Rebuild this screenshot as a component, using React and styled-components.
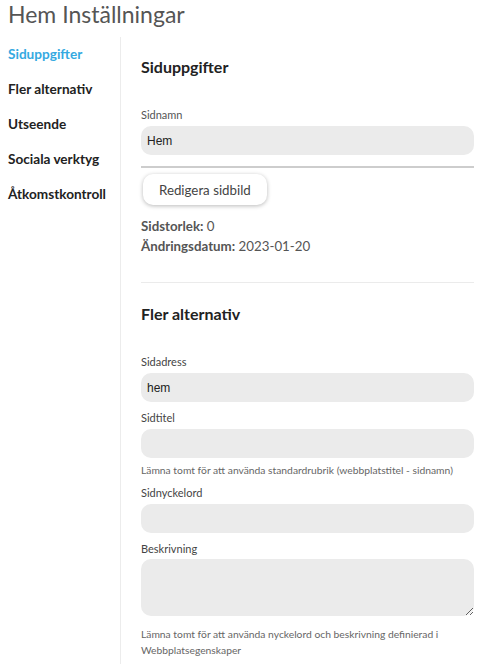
import styled, { createGlobalStyle } from "styled-components";

const GlobalStyle = createGlobalStyle`
  body {
    margin: 0;
    background: #fff;
    font-family: Lato, "Open Sans", sans-serif;
    color: #333;
  }
`;

const PageTitle = styled.h1`
  margin: 0 0 9px;
  padding: 0 8px;
  font-size: 23px;
  line-height: 28px;
  font-weight: 400;
  color: #555;
`;

const Layout = styled.div`
  display: flex;
  align-items: stretch;
`;

const SideNav = styled.nav`
  width: 120px;
  flex-shrink: 0;
  border-right: 1px solid #ececec;
  display: flex;
  flex-direction: column;
`;

const NavItem = styled.a`
  display: block;
  padding: 0 8px;
  font-size: 13.6px;
  line-height: 35px;
  font-weight: 700;
  text-decoration: none;
  color: ${(p) => (p.$active ? "#35a9e1" : "#222")};
  cursor: pointer;
`;

const Main = styled.main`
  flex: 1;
  padding: 20px 13px 10px 20px;
`;

const SectionTitle = styled.h2`
  margin: 0 0 31px;
  font-size: 16px;
  line-height: 20px;
  font-weight: 700;
  color: #222;
`;

const Section = styled.section`
  padding-bottom: ${(p) => p.$pb || 0}px;
`;

const Divider = styled.hr`
  margin: 0 0 21px;
  border: none;
  border-top: 1px solid #ebebeb;
`;

const Field = styled.div`
  display: flex;
  flex-direction: column;
  margin-bottom: ${(p) => (p.$flush ? 0 : 9)}px;
`;

const Label = styled.label`
  font-size: 11px;
  line-height: 14px;
  color: ${(p) => (p.$dark ? "#444" : "#555")};
  margin-bottom: 4px;
`;

const Input = styled.input`
  box-sizing: border-box;
  height: 29px;
  border: none;
  border-radius: 10px;
  background: #ebebeb;
  padding: 0 6px;
  font-family: "Liberation Sans", Arial, sans-serif;
  font-size: 12px;
  color: #222;
  outline: none;
`;

const TextArea = styled.textarea`
  box-sizing: border-box;
  height: 57px;
  margin-top: -1px;
  border: none;
  border-radius: 10px;
  background: #ebebeb;
  padding: 6px;
  font-family: "Liberation Sans", Arial, sans-serif;
  font-size: 12px;
  outline: none;
  resize: vertical;
`;

const Help = styled.p`
  margin: ${(p) => (p.$large ? "10px 0 0" : "5px 0 0")};
  font-size: 10.3px;
  line-height: ${(p) => (p.$large ? "16px" : "14px")};
  color: #666;
`;

const Rule = styled.div`
  margin-top: 11px;
  height: 2px;
  background: #cdcdcd;
`;

const Button = styled.button`
  margin: 6px 0 0 2px;
  height: 31px;
  padding: 0 16px;
  border: none;
  border-radius: 10px;
  background: #fff;
  box-shadow: 0 1px 4px rgba(0, 0, 0, 0.28);
  font-family: Lato, sans-serif;
  font-size: 13.3px;
  color: #444;
  cursor: pointer;
`;

const InfoList = styled.div`
  margin-top: 11px;
  font-size: 13.3px;
  line-height: 20px;
  color: #555;
`;

const InfoRow = styled.div`
  b {
    font-weight: 700;
  }
`;

const navItems = [
  "Siduppgifter",
  "Fler alternativ",
  "Utseende",
  "Sociala verktyg",
  "Åtkomstkontroll",
];

export default function App() {
  return (
    <>
      <GlobalStyle />
      <PageTitle>Hem Inställningar</PageTitle>
      <Layout>
        <SideNav>
          {navItems.map((item, i) => (
            <NavItem key={item} $active={i === 0}>
              {item}
            </NavItem>
          ))}
        </SideNav>
        <Main>
          <Section $pb={26}>
            <SectionTitle>Siduppgifter</SectionTitle>
            <Field $flush>
              <Label>Sidnamn</Label>
              <Input defaultValue="Hem" />
            </Field>
            <Rule />
            <Button>Redigera sidbild</Button>
            <InfoList>
              <InfoRow>
                <b>Sidstorlek:</b> 0
              </InfoRow>
              <InfoRow>
                <b>Ändringsdatum:</b> 2023-01-20
              </InfoRow>
            </InfoList>
          </Section>
          <Divider />
          <Section>
            <SectionTitle>Fler alternativ</SectionTitle>
            <Field>
              <Label $dark>Sidadress</Label>
              <Input defaultValue="hem" />
            </Field>
            <Field>
              <Label $dark>Sidtitel</Label>
              <Input />
              <Help>
                Lämna tomt för att använda standardrubrik (webbplatstitel -
                sidnamn)
              </Help>
            </Field>
            <Field>
              <Label $dark>Sidnyckelord</Label>
              <Input />
            </Field>
            <Field>
              <Label $dark>Beskrivning</Label>
              <TextArea />
              <Help $large>
                Lämna tomt för att använda nyckelord och beskrivning definierad
                i Webbplatsegenskaper
              </Help>
            </Field>
          </Section>
        </Main>
      </Layout>
    </>
  );
}
